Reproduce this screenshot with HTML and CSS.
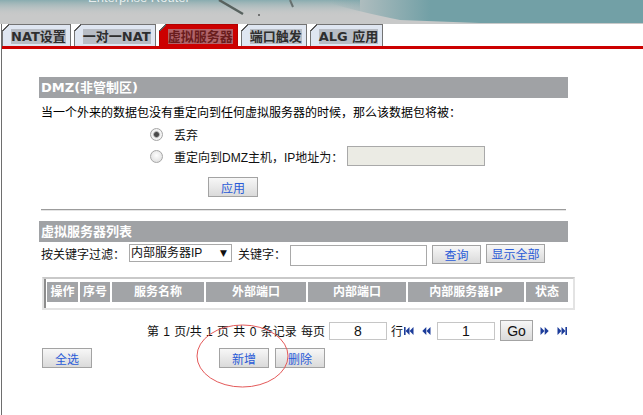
FILE: index.html
```html
<!DOCTYPE html>
<html lang="zh-CN">

<head>
    <meta charset="UTF-8">
    <title>虚拟服务器</title>
    <link rel="stylesheet" href="styles.css">
</head>

<body>
    <div class="banner">
        <svg width="643" height="24" viewBox="0 0 643 24">
            <defs>
                <linearGradient id="topFade" x1="0" x2="0" y1="0" y2="1">
                    <stop offset="0" stop-color="#74a2a7" stop-opacity="0.75"/>
                    <stop offset="0.8" stop-color="#c8c9c9" stop-opacity="0"/>
                </linearGradient>
                <linearGradient id="teal" x1="330" x2="430" y1="0" y2="0" gradientUnits="userSpaceOnUse">
                    <stop offset="0" stop-color="#72a0a6" stop-opacity="0"/>
                    <stop offset="1" stop-color="#72a0a6"/>
                </linearGradient>
            </defs>
            <rect width="643" height="24" fill="#c8c9c9"/>
            <rect width="360" height="20" fill="url(#topFade)"/>
            <path d="M320 0H643V23H480L400 20Q350 10 320 0Z" fill="url(#teal)"/>
            <text x="88" y="1.5" font-family="Liberation Sans, sans-serif" font-size="13" fill="#ffffff" fill-opacity="0.8">Enterprise Router</text>
            <path d="M219 0L243 14" stroke="#58625f" stroke-width="2.5"/>
            <circle cx="259" cy="15" r="1" fill="#555"/>
            <path d="M290 0L293 7" stroke="#66706f" stroke-width="2"/>
        </svg>
    </div>

    <div class="page">
        <ul class="tabs">
            <li class="tab"><span>NAT设置</span></li>
            <li class="tab"><span>一对一NAT</span></li>
            <li class="tab active"><span>虚拟服务器</span></li>
            <li class="tab"><span>端口触发</span></li>
            <li class="tab"><span>ALG 应用</span></li>
        </ul>

        <div class="content">
            <div class="bar">DMZ(非管制区)</div>
            <p class="desc">当一个外来的数据包没有重定向到任何虚拟服务器的时候，那么该数据包将被：</p>
            <div class="opts">
                <label class="opt"><input type="radio" name="dmz" checked><span>丢弃</span></label>
                <label class="opt"><input type="radio" name="dmz"><span>重定向到DMZ主机，IP地址为：</span><input type="text" class="ip" disabled></label>
            </div>
            <div class="apply-row"><button class="btn">应用</button></div>
            <hr class="sep">

            <div class="bar list">虚拟服务器列表</div>
            <div class="filter">
                <span class="lbl">按关键字过滤：</span>
                <span class="select">
                    <select><option>内部服务器IP</option></select>
                    <span class="caret">▼</span>
                </span>
                <span class="lbl key">关键字：</span>
                <input type="text" class="kw">
                <button class="btn">查询</button>
                <button class="btn wide">显示全部</button>
            </div>

            <div class="grid">
                <div class="grid-in">
                    <div class="grid-head">
                        <span>操作</span>
                        <span>序号</span>
                        <span>服务名称</span>
                        <span>外部端口</span>
                        <span>内部端口</span>
                        <span>内部服务器IP</span>
                        <span>状态</span>
                    </div>
                </div>
            </div>

            <div class="pager">
                <span class="info">第 1 页/共 1 页 共 0 条记录 每页</span>
                <input type="text" class="num" value="8">
                <span class="rows">行</span>
                <svg class="nav first" width="10" height="8" viewBox="0 0 10 8"><rect width="1.6" height="8"/><path d="M5.5 0L1.6 4L5.5 8Z"/><path d="M9.5 0L5.6 4L9.5 8Z"/></svg>
                <svg class="nav prev" width="9" height="8" viewBox="0 0 9 8"><path d="M4.3 0L0.3 4L4.3 8Z"/><path d="M8.5 0L4.5 4L8.5 8Z"/></svg>
                <input type="text" class="num page-no" value="1">
                <button class="btn go">Go</button>
                <svg class="nav next" width="9" height="8" viewBox="0 0 9 8"><path d="M0.5 0L4.5 4L0.5 8Z"/><path d="M4.7 0L8.7 4L4.7 8Z"/></svg>
                <svg class="nav last" width="10" height="8" viewBox="0 0 10 8"><path d="M0.5 0L4.4 4L0.5 8Z"/><path d="M4.5 0L8.4 4L4.5 8Z"/><rect x="8.4" width="1.6" height="8"/></svg>
            </div>

            <div class="actions">
                <button class="btn">全选</button>
                <button class="btn add">新增</button>
                <button class="btn del">删除</button>
                <svg class="mark" width="94" height="64" viewBox="0 0 94 64"><ellipse cx="46.5" cy="32" rx="45.5" ry="31" fill="none" stroke="#e45a5a" stroke-width="1"/></svg>
            </div>
        </div>
    </div>
</body>

</html>
```

FILE: styles.css
```css
* {
    box-sizing: border-box;
}

body {
    margin: 0;
    background: #fff;
    font: 12px "Liberation Sans", "Noto Sans CJK SC", sans-serif;
    color: #111;
}

.banner {
    height: 24px;
}

.banner svg {
    display: block;
}

.page {
    margin-left: 1px;
    border-left: 1px solid #6e6e6e;
    min-height: 391px;
}

/* tabs */
.tabs {
    display: flex;
    align-items: flex-end;
    margin: 0;
    padding: 0;
    list-style: none;
    border-bottom: 3px solid #cc0000;
}

.tab {
    position: relative;
    margin-right: 3px;
    padding: 4px 4px 2px 8px;
    background: #dfe6f1;
    border: 1px solid #737373;
    border-bottom: 0;
    font: bold 13px "DejaVu Sans", "Noto Sans CJK SC", sans-serif;
    color: #2e2e2e;
}

.tab span {
    display: block;
    line-height: 15px;
    background: #b8bdc5;
}

.tab::before {
    content: "";
    position: absolute;
    left: -1px;
    top: -1px;
    width: 7px;
    height: 7px;
    background: linear-gradient(135deg, #fff 0 46%, #5a5a5a 46% 62%, transparent 62%);
}

.tab.active {
    background: #cc0000;
    border-color: #b30000;
    color: #6a1c1c;
}

.tab.active span {
    background: #b2646a;
}

/* content */
.content {
    width: 529px;
    margin-left: 37px;
}

.bar {
    margin-top: 28px;
    height: 21px;
    padding-left: 2px;
    background: #a0a2a5;
    color: #fff;
    font: bold 13px/21px "DejaVu Sans", "Noto Sans CJK SC", sans-serif;
}

.bar.list {
    margin-top: 10px;
}

.desc {
    margin: 8px 0 0;
    padding-left: 2px;
    line-height: 14px;
    color: #000;
}

.opts {
    margin-top: 3px;
    padding-left: 111px;
}

.opt {
    display: flex;
    align-items: center;
    height: 22px;
}

.opt input[type=radio] {
    appearance: none;
    width: 13px;
    height: 13px;
    margin: 0 11px 0 0;
    border: 1px solid #a6a6a6;
    border-radius: 50%;
    background: radial-gradient(circle at 50% 40%, #fdfdfd, #d9d9d9);
}

.opt input[type=radio]:checked {
    background: radial-gradient(circle, #4a4a4a 0 2px, #8e8e8e 2.6px, #e8e8e8 3.6px, #f7f7f7 4.6px, #d6d6d6 100%);
}

.ip {
    width: 138px;
    height: 20px;
    margin-left: 4px;
    border: 1px solid #a9a9a9;
    background: #ebebe4;
}

.apply-row {
    margin-top: 10px;
    padding-left: 169px;
}

.btn {
    display: block;
    width: 50px;
    height: 20px;
    padding: 0;
    border: 1px solid #a3a3a3;
    background: linear-gradient(#f7f7f7, #dadada);
    color: #2a5bd7;
    font: 12px "Liberation Sans", "Noto Sans CJK SC", sans-serif;
}

.sep {
    height: 2px;
    margin: 12px 2px 0;
    border: 0;
    border-top: 1px solid #9c9c9c;
    border-bottom: 1px solid #e4e4e4;
}

/* filter row */
.filter {
    display: flex;
    align-items: flex-start;
    height: 22px;
    margin-top: 2px;
    padding-left: 2px;
}

.filter .lbl {
    line-height: 22px;
}

.select {
    display: flex;
    align-items: center;
    width: 103px;
    height: 18px;
    margin-left: 4px;
    padding: 0 4px 0 1px;
    border: 1px solid #a9a9a9;
}

.select select {
    flex: 1;
    min-width: 0;
    margin: 0;
    padding: 0;
    border: 0;
    background: none;
    appearance: none;
    font: inherit;
    color: #111;
}

.caret {
    font: 9px "DejaVu Sans", sans-serif;
}

.filter .key {
    margin-left: 6px;
}

.kw {
    width: 137px;
    height: 21px;
    margin: 1px 0 0 4px;
    border: 1px solid #a9a9a9;
}

.filter .btn {
    width: 49px;
    height: 19px;
    margin: 1px 0 0 5px;
}

.filter .btn.wide {
    width: 59px;
    margin-top: 0;
}

/* list table */
.grid {
    width: 533px;
    margin: 11px 0 0 3px;
    border: 2px solid #e3e3e3;
    border-top-color: #c9c9c9;
}

.grid-in {
    padding: 3px 5px 6px 1px;
    border-left: 2px solid #8c8c8c;
}

.grid-head {
    display: flex;
    gap: 2px;
}

.grid-head span {
    height: 20px;
    background: #a2a4a7;
    color: #fff;
    font: bold 12px/20px "DejaVu Sans", "Noto Sans CJK SC", sans-serif;
    text-align: center;
    white-space: nowrap;
}

.grid-head span:nth-child(1) { width: 31px; }
.grid-head span:nth-child(2) { width: 30px; }
.grid-head span:nth-child(3) { width: 92px; }
.grid-head span:nth-child(4) { width: 100px; }
.grid-head span:nth-child(5) { width: 98px; }
.grid-head span:nth-child(6) { width: 116px; }
.grid-head span:nth-child(7) { width: 42px; }

/* pager */
.pager {
    display: flex;
    justify-content: flex-end;
    align-items: center;
    height: 21px;
    margin-top: 10px;
    padding-right: 1px;
}

.pager .info {
    word-spacing: 1px;
}

.num {
    width: 58px;
    height: 18px;
    margin-left: 4px;
    border: 1px solid #c6c6c6;
    text-align: center;
    font: 14px "Liberation Sans", sans-serif;
    color: #111;
}

.rows {
    margin-left: 4px;
}

.nav {
    fill: #1c3c9a;
}

.nav.first { margin-left: 1px; }
.nav.prev { margin-left: 8px; }
.num.page-no { margin-left: 6px; }

.btn.go {
    width: 33px;
    height: 21px;
    margin-left: 5px;
    color: #111;
    font-size: 14px;
}

.nav.next { margin-left: 7px; }
.nav.last { margin-left: 8px; }

/* bottom buttons */
.actions {
    position: relative;
    display: flex;
    margin-top: 7px;
    padding-left: 3px;
}

.actions .add {
    margin-left: 127px;
}

.actions .del {
    margin-left: 6px;
}

.mark {
    position: absolute;
    left: 157px;
    top: -24px;
}
```
